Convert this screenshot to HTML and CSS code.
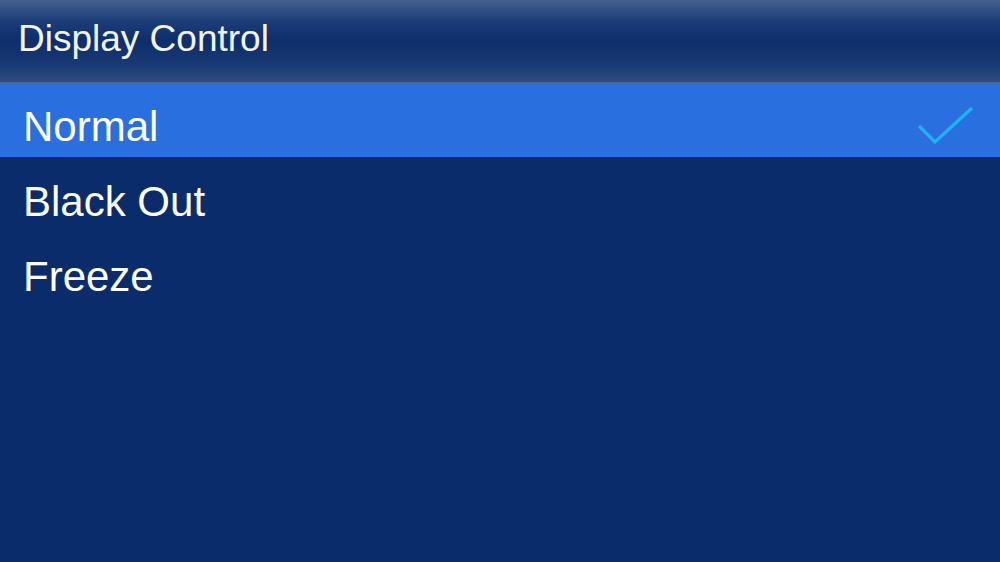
FILE: index.html
```html
<!DOCTYPE html>
<html>
<head>
<meta charset="utf-8">
<link rel="stylesheet" href="styles.css">
</head>
<body>
<div class="screen">
  <header class="title-bar"><span class="title">Display Control</span></header>
  <ul class="menu">
    <li class="item selected"><span>Normal</span>
      <svg class="check" width="60" height="44" viewBox="0 0 60 44"><polyline points="2,22 18,38 55,4" fill="none" stroke="#1fb3f2" stroke-width="3.2"/></svg>
    </li>
    <li class="item"><span>Black Out</span></li>
    <li class="item"><span>Freeze</span></li>
  </ul>
</div>
</body>
</html>
```
FILE: styles.css
```css
html, body { margin: 0; padding: 0; }
body { width: 1000px; height: 562px; overflow: hidden; background: #0a2c6b; font-family: "Liberation Sans", Arial, sans-serif; color: #fff; }
.screen { width: 1000px; height: 562px; display: flex; flex-direction: column; }
.title-bar {
  height: 83px; box-sizing: border-box; padding-left: 18px;
  display: flex; align-items: center;
  background: linear-gradient(to bottom, #44618f 0%, #1d3d78 25%, #0d2e6c 50%, #1a3a74 80%, #2f4c80 100%);
  border-bottom: 1px solid #4a6696;
}
.title { font-size: 37px; color: #f2f4f8; margin-top: -4px; }
.menu { list-style: none; margin: 0; padding: 0; }
.item { height: 75px; display: flex; align-items: center; justify-content: space-between; padding: 0 23px 0 23px; font-size: 42px; }
.item span { margin-top: 14px; }
.selected { background: #2a6fe0; height: 74px; }
.check { display: block; margin-top: 12px; }
```
